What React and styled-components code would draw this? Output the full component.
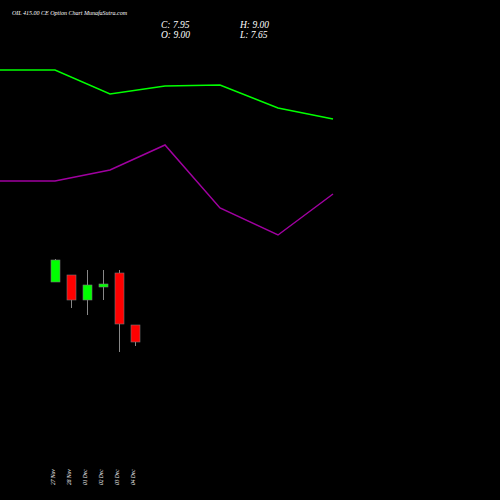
import React from 'react';
import styled, { createGlobalStyle } from 'styled-components';

const Global = createGlobalStyle`
  body { margin: 0; background: #000; }
`;

const Page = styled.div`
  position: relative;
  width: 500px;
  height: 500px;
  background: #000;
  font-family: "Liberation Serif", serif;
  font-style: italic;
  color: #fff;
  overflow: hidden;
`;

const Title = styled.div`
  position: absolute;
  left: 12px;
  top: 10px;
  font-size: 6px;
`;

const Quote = styled.div`
  position: absolute;
  left: ${p => p.x}px;
  top: 20px;
  font-size: 9.5px;
  line-height: 10px;
`;

const Chart = styled.svg`
  position: absolute;
  left: 0;
  top: 0;
`;

const candles = [
  { x: 51, o: 282, c: 260, h: 259, l: 282, up: true },
  { x: 67, o: 275, c: 300, h: 275, l: 308, up: false },
  { x: 83, o: 300, c: 285, h: 270, l: 315, up: true },
  { x: 99, o: 287, c: 284, h: 270, l: 300, up: true },
  { x: 115, o: 273, c: 324, h: 270, l: 352, up: false },
  { x: 131, o: 325, c: 342, h: 325, l: 346, up: false },
];
const dates = ['27 Nov', '28 Nov', '01 Dec', '02 Dec', '03 Dec', '04 Dec'];

export default function App() {
  return (
    <Page>
      <Global />
      <Title>OIL 415.00 CE Option Chart MunafaSutra.com</Title>
      <Quote x={161}>C: 7.95<br />O: 9.00</Quote>
      <Quote x={240}>H: 9.00<br />L: 7.65</Quote>
      <Chart width="500" height="500">
        <polyline fill="none" stroke="#00ff00" strokeWidth="1.5"
          points="0,70 55,70 110,94 165,86 220,85 278,108 333,119" />
        <polyline fill="none" stroke="#a000a0" strokeWidth="1.5"
          points="0,181 55,181 110,170 165,145 220,208 278,235 333,194" />
        {candles.map((k, i) => {
          const top = Math.min(k.o, k.c);
          const h = Math.max(Math.abs(k.o - k.c), 3);
          return (
            <g key={i}>
              <line x1={k.x + 4.5} x2={k.x + 4.5} y1={k.h} y2={k.l} stroke="#888" strokeWidth="1" />
              <rect x={k.x} y={top} width="9" height={h}
                fill={k.up ? '#00ff00' : '#ff0000'} stroke="#777" strokeWidth="0.6" />
            </g>
          );
        })}
        {dates.map((d, i) => (
          <text key={d} transform={`translate(${55 + i * 16},485) rotate(-90)`}
            fill="#fff" fontSize="5.5" fontStyle="italic" fontFamily="Liberation Serif, serif">{d}</text>
        ))}
      </Chart>
    </Page>
  );
}
